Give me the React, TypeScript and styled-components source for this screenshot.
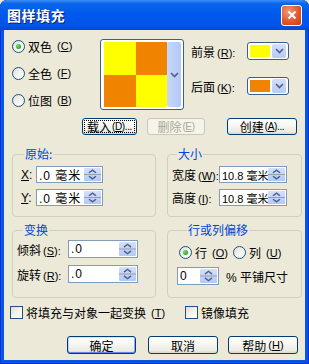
import React from "react";
import styled, { createGlobalStyle, css } from "styled-components";

const GlobalStyle = createGlobalStyle`
  html, body {
    margin: 0;
    padding: 0;
    background: #ece9d8;
  }
  body {
    font-family: "Liberation Sans", "Noto Sans CJK SC", sans-serif;
    font-size: 12px;
    color: #000;
  }
`;

const Window = styled.div`
  width: 309px;
  height: 364px;
  display: flex;
  flex-direction: column;
  background: #0556e6;
  border-radius: 7px 7px 0 0;
  overflow: hidden;
  box-shadow: inset 0 0 0 1px #0831d9;
`;

const TitleBar = styled.div`
  height: 30px;
  flex: none;
  display: flex;
  align-items: center;
  justify-content: space-between;
  padding: 0 7px 0 7px;
  background: linear-gradient(
    #3d8ff6 0%,
    #0a66ea 12%,
    #0058ee 45%,
    #0055e8 85%,
    #0048cf 100%
  );
`;

const Title = styled.span`
  color: #fff;
  font-family: "Noto Sans CJK SC", sans-serif;
  font-size: 14px;
  font-weight: 700;
  letter-spacing: 0.5px;
  text-shadow: 1px 1px 0 #0a1e6e;
`;

const CloseButton = styled.div`
  width: 19px;
  height: 19px;
  border: 1px solid #fff;
  border-radius: 3px;
  background: radial-gradient(circle at 35% 30%, #f09a77 0%, #e2582b 55%, #c43d12 100%);
  display: flex;
  align-items: center;
  justify-content: center;
`;

const Body = styled.div`
  flex: 1;
  margin: 0 4px 4px;
  background: #ece9d8;
  display: flex;
  flex-direction: column;
`;

const TopRow = styled.div`
  display: flex;
  margin-top: 8px;
  padding-left: 8px;
  height: 72px;
`;

const RadioCol = styled.div`
  width: 88px;
  display: flex;
  flex-direction: column;
  gap: 13px;
  padding-top: 1px;
`;

const Choice = styled.label`
  display: flex;
  align-items: center;
  gap: 3px;
  height: 14px;
  white-space: nowrap;
`;

const RadioDot = styled.span<{ $on?: boolean }>`
  width: 11px;
  height: 11px;
  flex: none;
  border: 1px solid #1c5180;
  border-radius: 50%;
  background: linear-gradient(135deg, #dcdcd7 0%, #f3f3ef 50%, #ffffff 100%);
  display: flex;
  align-items: center;
  justify-content: center;
  ${(p) =>
    p.$on &&
    css`
      &::after {
        content: "";
        width: 5px;
        height: 5px;
        border-radius: 50%;
        background: radial-gradient(circle at 35% 35%, #6fe06f 0%, #2fb32f 60%, #1e8d1e 100%);
      }
    `}
`;

const CheckBox = styled.span`
  width: 11px;
  height: 11px;
  flex: none;
  border: 1px solid #1c5180;
  background: linear-gradient(135deg, #dcdcd7 0%, #f3f3ef 50%, #ffffff 100%);
`;

const U = styled.span`
  text-decoration: underline;
`;

const Key = styled.span<{ $small?: boolean }>`
  font-size: ${(p) => (p.$small ? 10 : 11)}px;
  margin-left: ${(p) => (p.$small ? 1 : 2)}px;
  letter-spacing: ${(p) => (p.$small ? -0.4 : 0)}px;
`;

const Preview = styled.div`
  width: 84px;
  height: 71px;
  margin-top: 1px;
  box-sizing: border-box;
  border: 1px solid #3d5d8a;
  border-radius: 3px;
  background: #fff;
  padding: 2px 2px 2px 3px;
  display: flex;
`;

const Checker = styled.div`
  flex: 1;
  display: grid;
  grid-template-columns: 1fr 1fr;
  grid-template-rows: 1fr 1fr;
`;

const Cell = styled.div<{ $c: string }>`
  background: ${(p) => p.$c};
`;

const DropStrip = styled.div`
  width: 14px;
  background: linear-gradient(90deg, #c9d8fb, #b3c8f6);
  border-radius: 2px;
  display: flex;
  align-items: center;
  justify-content: center;
`;

const ColorCol = styled.div`
  margin-left: 7px;
  padding-top: 4px;
  display: flex;
  flex-direction: column;
  gap: 17px;
`;

const ColorRow = styled.div`
  display: flex;
  align-items: center;
  height: 18px;
`;

const ColorLabel = styled.span`
  width: 56px;
  white-space: nowrap;
`;

const ColorButton = styled.div`
  width: 42px;
  height: 18px;
  box-sizing: border-box;
  border: 1px solid #3d5d8a;
  border-radius: 3px;
  background: #fff;
  display: flex;
  align-items: center;
  padding: 1px 2px 1px 2px;
  gap: 2px;
`;

const Swatch = styled.div<{ $c: string }>`
  width: 21px;
  height: 12px;
  background: ${(p) => p.$c};
`;

const ArrowBox = styled.div`
  width: 14px;
  height: 14px;
  border-radius: 2px;
  background: linear-gradient(#d2defc, #b6cbf8);
  display: flex;
  align-items: center;
  justify-content: center;
`;

const ButtonRow = styled.div<{ $top: number; $left: number }>`
  display: flex;
  margin-top: ${(p) => p.$top}px;
  padding-left: ${(p) => p.$left}px;
`;

const Button = styled.div<{
  $w: number;
  $h: number;
  $gap?: number;
  $disabled?: boolean;
  $focus?: boolean;
  $default?: boolean;
}>`
  width: ${(p) => p.$w}px;
  height: ${(p) => p.$h}px;
  margin-left: ${(p) => p.$gap ?? 0}px;
  box-sizing: border-box;
  border: 1px solid #003c74;
  border-radius: 3px;
  background: linear-gradient(#ffffff 0%, #f6f6f2 45%, #ebeae3 85%, #d8d4c8 100%);
  display: flex;
  align-items: center;
  justify-content: center;
  white-space: nowrap;
  ${(p) =>
    p.$focus &&
    css`
      outline: 1px dotted #000;
      outline-offset: -3px;
    `}
  ${(p) =>
    p.$default &&
    css`
      box-shadow: inset 0 1px 0 #cee7ff, inset 0 -1px 0 #6982ee, inset 1px 0 0 #b9d1fa,
        inset -1px 0 0 #8fa8f0;
    `}
  ${(p) =>
    p.$disabled &&
    css`
      border-color: #c9c7ba;
      background: #f5f4ea;
      color: #aca899;
    `}
`;

const GroupRow = styled.div<{ $top: number; $h: number }>`
  display: flex;
  gap: 11px;
  margin-top: ${(p) => p.$top}px;
  padding-left: 8px;
  height: ${(p) => p.$h}px;
`;

const Group = styled.fieldset<{ $w: number; $pad: string }>`
  margin: 0;
  width: ${(p) => p.$w}px;
  box-sizing: border-box;
  border: 1px solid #d0d0bf;
  border-radius: 4px;
  padding: ${(p) => p.$pad};
  display: flex;
  flex-direction: column;
`;

const Legend = styled.legend<{ $x: number }>`
  color: #0046d5;
  padding: 0 1px;
  margin-left: ${(p) => p.$x}px;
  line-height: 14px;
  font-family: "Noto Sans CJK SC", sans-serif;
`;

const FieldRow = styled.div<{ $gap?: number; $shift?: number }>`
  display: flex;
  align-items: center;
  margin-top: ${(p) => p.$gap ?? 0}px;
  margin-left: ${(p) => p.$shift ?? 0}px;
`;

const FieldLabel = styled.span<{ $w: number }>`
  width: ${(p) => p.$w}px;
  white-space: nowrap;
  flex: none;
`;

const Field = styled.div<{ $w: number; $h: number }>`
  width: ${(p) => p.$w}px;
  height: ${(p) => p.$h}px;
  box-sizing: border-box;
  border: 1px solid #7f9db9;
  background: #fff;
  display: flex;
  align-items: center;
  padding: 0 1px 0 2px;
  flex: none;
`;

const FieldText = styled.span<{ $tight?: boolean }>`
  flex: 1;
  overflow: hidden;
  white-space: nowrap;
  letter-spacing: ${(p) => (p.$tight ? 0 : 1)}px;
  font-size: ${(p) => (p.$tight ? 11 : 12)}px;
`;

const SpinBox = styled.div`
  width: 17px;
  height: calc(100% - 2px);
  flex: none;
  display: flex;
`;

const Suffix = styled.span`
  margin-left: 7px;
  white-space: nowrap;
`;

const CheckRow = styled.div`
  display: flex;
  align-items: center;
  margin-top: 8px;
  padding-left: 6px;
  height: 13px;
`;

const CheckItem = styled.label<{ $w?: number }>`
  display: flex;
  align-items: center;
  gap: 3px;
  white-space: nowrap;
  width: ${(p) => (p.$w ? `${p.$w}px` : "auto")};
`;

const Chevron = () => (
  <svg width="9" height="6" viewBox="0 0 9 6">
    <path d="M1 1 L4.5 4.5 L8 1" stroke="#4d6185" strokeWidth="1.6" fill="none" />
  </svg>
);

const Spin = () => (
  <SpinBox>
    <svg width="17" height="100%" viewBox="0 0 17 15" preserveAspectRatio="none">
      <defs>
        <linearGradient id="sp" x1="0" y1="0" x2="0" y2="1">
          <stop offset="0" stopColor="#d3e0fd" />
          <stop offset="1" stopColor="#b4c8f7" />
        </linearGradient>
      </defs>
      <rect x="0" y="0" width="17" height="15" rx="1" fill="url(#sp)" />
      <line x1="0" y1="7.5" x2="17" y2="7.5" stroke="#9a9a9a" strokeWidth="1" />
      <path d="M5 5.5 L8.5 2.5 L12 5.5" stroke="#4d6185" strokeWidth="1.5" fill="none" />
      <path d="M5 9.5 L8.5 12.5 L12 9.5" stroke="#4d6185" strokeWidth="1.5" fill="none" />
    </svg>
  </SpinBox>
);

const NumField = ({
  w,
  h,
  text,
  tight,
}: {
  w: number;
  h: number;
  text: string;
  tight?: boolean;
}) => (
  <Field $w={w} $h={h}>
    <FieldText $tight={tight}>{text}</FieldText>
    <Spin />
  </Field>
);

const YELLOW = "#ffff00";
const ORANGE = "#f08400";

export default function App() {
  return (
    <>
      <GlobalStyle />
      <Window>
        <TitleBar>
          <Title>图样填充</Title>
          <CloseButton>
            <svg width="10" height="10" viewBox="0 0 10 10">
              <path d="M1.5 1.5 L8.5 8.5 M8.5 1.5 L1.5 8.5" stroke="#fff" strokeWidth="2" />
            </svg>
          </CloseButton>
        </TitleBar>
        <Body>
          <TopRow>
            <RadioCol>
              <Choice>
                <RadioDot $on />
                双色<Key>(<U>C</U>)</Key>
              </Choice>
              <Choice>
                <RadioDot />
                全色<Key>(<U>F</U>)</Key>
              </Choice>
              <Choice>
                <RadioDot />
                位图<Key>(<U>B</U>)</Key>
              </Choice>
            </RadioCol>
            <Preview>
              <Checker>
                <Cell $c={YELLOW} />
                <Cell $c={ORANGE} />
                <Cell $c={ORANGE} />
                <Cell $c={YELLOW} />
              </Checker>
              <DropStrip>
                <Chevron />
              </DropStrip>
            </Preview>
            <ColorCol>
              <ColorRow>
                <ColorLabel>
                  前景<Key>(<U>R</U>):</Key>
                </ColorLabel>
                <ColorButton>
                  <Swatch $c={YELLOW} />
                  <ArrowBox>
                    <Chevron />
                  </ArrowBox>
                </ColorButton>
              </ColorRow>
              <ColorRow>
                <ColorLabel>
                  后面<Key>(<U>K</U>):</Key>
                </ColorLabel>
                <ColorButton>
                  <Swatch $c={ORANGE} />
                  <ArrowBox>
                    <Chevron />
                  </ArrowBox>
                </ColorButton>
              </ColorRow>
            </ColorCol>
          </TopRow>

          <ButtonRow $top={8} $left={78}>
            <Button $w={55} $h={17} $focus>
              载入<Key $small>(<U>D</U>)...</Key>
            </Button>
            <Button $w={58} $h={17} $gap={10} $disabled>
              删除<Key $small>(<U>E</U>)</Key>
            </Button>
            <Button $w={70} $h={17} $gap={22}>
              创建<Key $small>(<U>A</U>)...</Key>
            </Button>
          </ButtonRow>

          <GroupRow $top={12} $h={70}>
            <Group $w={144} $pad="5px 0 0 8px">
              <Legend $x={3}>原始:</Legend>
              <FieldRow>
                <FieldLabel $w={15}>
                  <U>X</U>:
                </FieldLabel>
                <NumField w={67} h={17} text=".0 毫米" />
              </FieldRow>
              <FieldRow $gap={6}>
                <FieldLabel $w={15}>
                  <U>Y</U>:
                </FieldLabel>
                <NumField w={67} h={17} text=".0 毫米" />
              </FieldRow>
            </Group>
            <Group $w={135} $pad="5px 0 0 4px">
              <Legend $x={5}>大小</Legend>
              <FieldRow>
                <FieldLabel $w={47}>
                  宽度<Key>(<U>W</U>):</Key>
                </FieldLabel>
                <NumField w={68} h={17} text="10.8 毫米" tight />
              </FieldRow>
              <FieldRow $gap={6}>
                <FieldLabel $w={47}>
                  高度<Key>(<U>I</U>):</Key>
                </FieldLabel>
                <NumField w={68} h={17} text="10.8 毫米" tight />
              </FieldRow>
            </Group>
          </GroupRow>

          <GroupRow $top={6} $h={75}>
            <Group $w={144} $pad="3px 0 0 4px">
              <Legend $x={6}>变换</Legend>
              <FieldRow>
                <FieldLabel $w={51}>
                  倾斜<Key>(<U>S</U>):</Key>
                </FieldLabel>
                <NumField w={70} h={18} text=".0" />
              </FieldRow>
              <FieldRow $gap={7}>
                <FieldLabel $w={51}>
                  旋转<Key>(<U>R</U>):</Key>
                </FieldLabel>
                <NumField w={70} h={18} text=".0" />
              </FieldRow>
            </Group>
            <Group $w={135} $pad="7px 0 0 11px">
              <Legend $x={8}>行或列偏移</Legend>
              <FieldRow>
                <CheckItem $w={54}>
                  <RadioDot $on />
                  行<Key>(<U>O</U>)</Key>
                </CheckItem>
                <CheckItem>
                  <RadioDot />
                  列<Key>(<U>U</U>)</Key>
                </CheckItem>
              </FieldRow>
              <FieldRow $gap={6} $shift={-2}>
                <NumField w={42} h={18} text="0" />
                <Suffix>% 平铺尺寸</Suffix>
              </FieldRow>
            </Group>
          </GroupRow>

          <CheckRow>
            <CheckItem $w={175}>
              <CheckBox />
              将填充与对象一起变换<Key>(<U>T</U>)</Key>
            </CheckItem>
            <CheckItem>
              <CheckBox />
              镜像填充
            </CheckItem>
          </CheckRow>

          <ButtonRow $top={17} $left={63}>
            <Button $w={69} $h={18} $default>
              确定
            </Button>
            <Button $w={70} $h={18} $gap={12}>
              取消
            </Button>
            <Button $w={70} $h={18} $gap={10}>
              帮助<Key>(<U>H</U>)</Key>
            </Button>
          </ButtonRow>
        </Body>
      </Window>
    </>
  );
}
